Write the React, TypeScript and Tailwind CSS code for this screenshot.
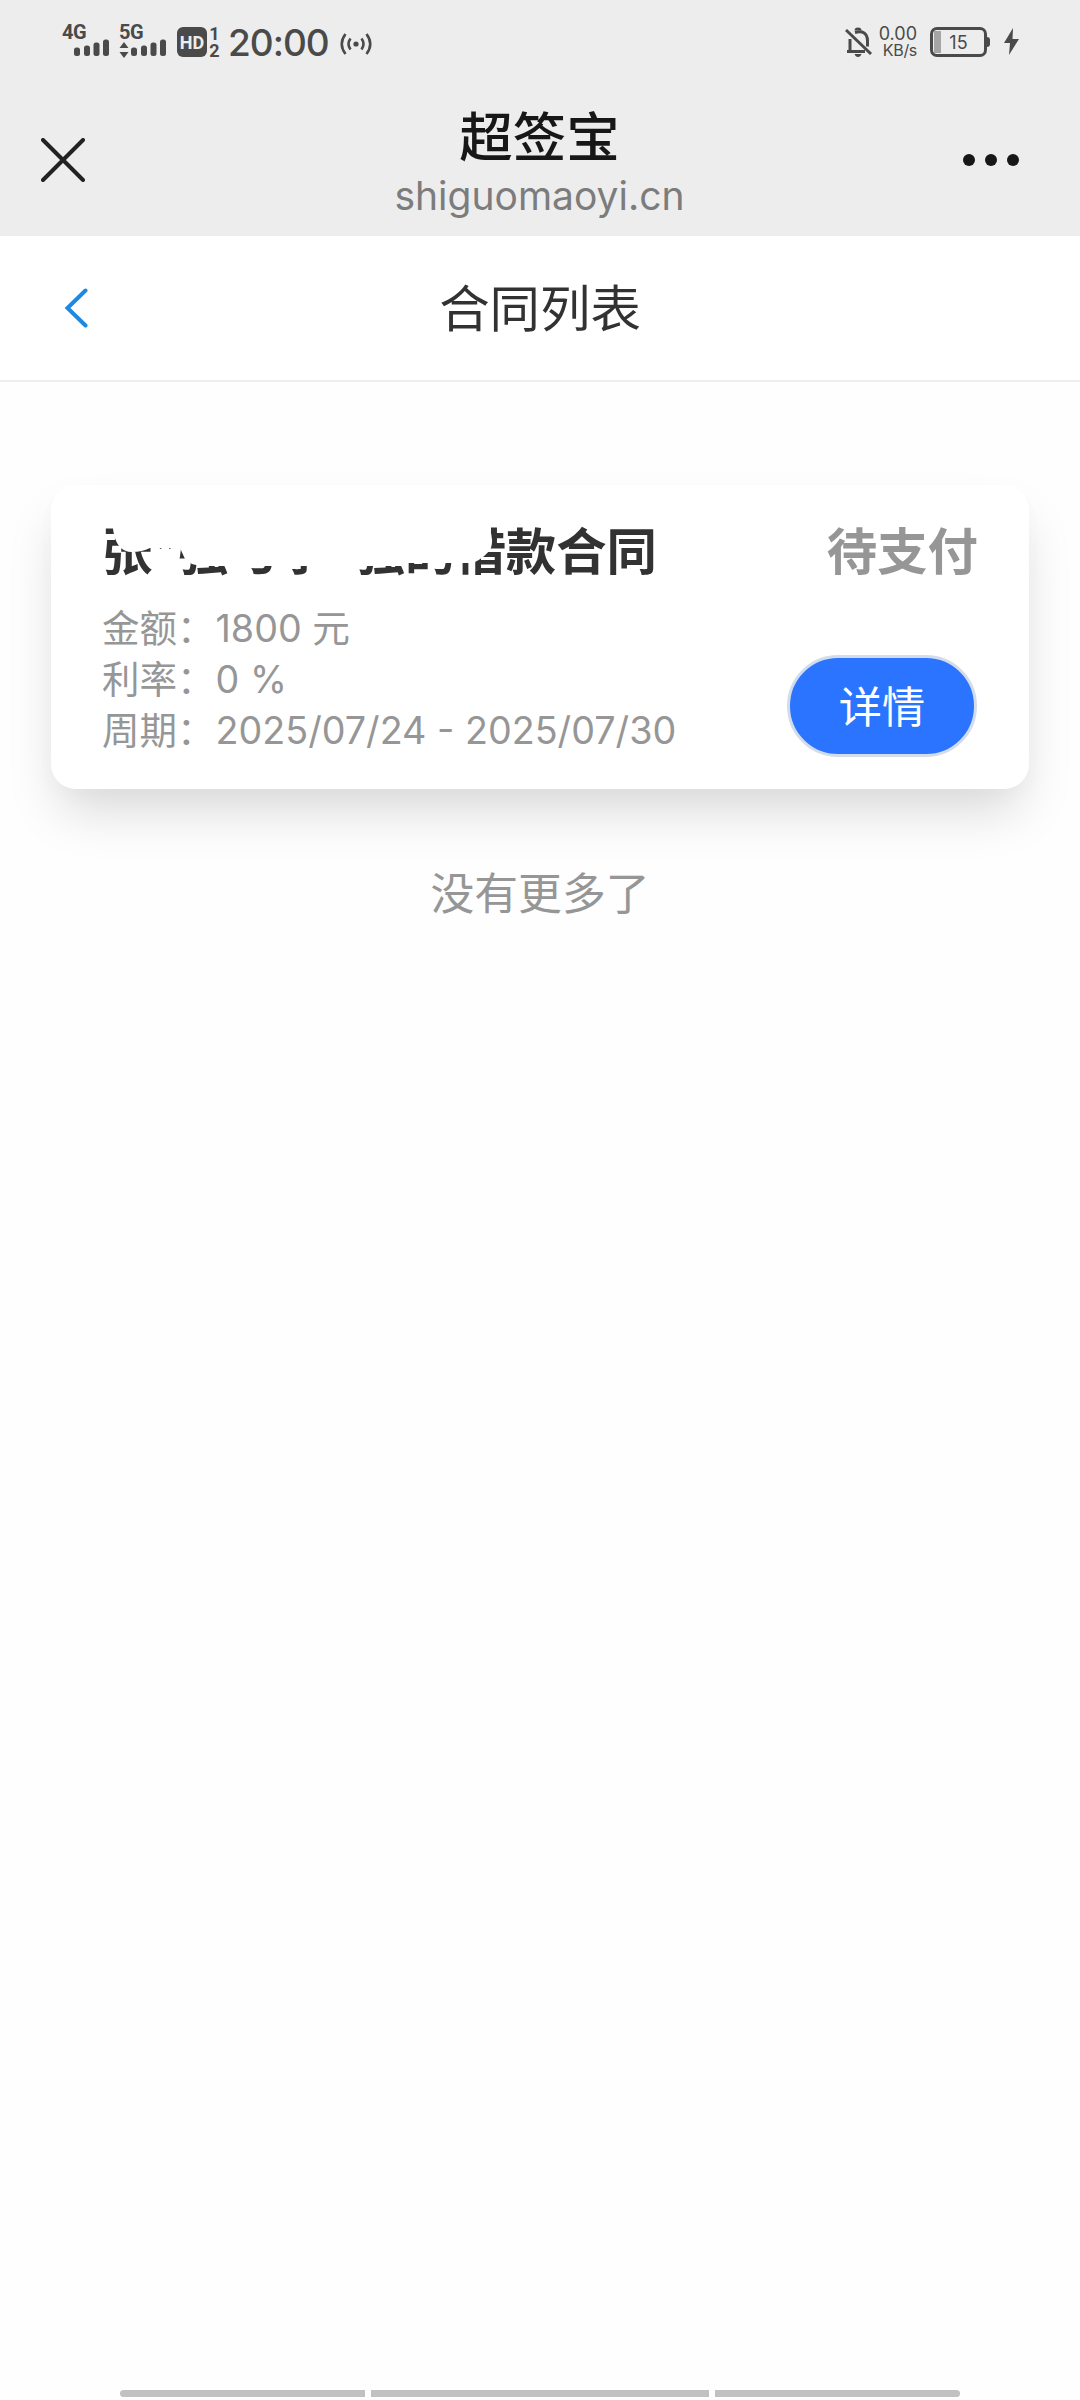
import React from "react";

interface ContractInterface {
  id: number;
  title: string;
  status: string;
  rows: Array<{ label: string; value: string }>;
}

const contracts: Array<ContractInterface> = [
  {
    id: 1,
    title: "张*强与李*强的借款合同",
    status: "待支付",
    rows: [
      { label: "金额：", value: "1800 元" },
      { label: "利率：", value: "0 %" },
      { label: "周期：", value: "2025/07/24 - 2025/07/30" },
    ],
  },
];

const Signal: React.FC<{ label: string; data?: boolean }> = ({ label, data }) => (
  <div className="relative h-[34px] w-[48px] text-[#4a4a4a]">
    <div className="font-['Roboto'] text-[20px] leading-[14px] font-bold tracking-[-0.5px]">{label}</div>
    <svg className="absolute top-0 left-0" width="48" height="34" fill="currentColor">
      {data && <path d="M5 17l4.500 6h-9zM5 33l4.500-6h-9z" />}
      <rect x="12" y="22.500" width="6" height="8.500" rx="2.500" />
      <rect x="22" y="20.500" width="6" height="10.500" rx="2.500" />
      <rect x="31.500" y="17.500" width="6" height="13.500" rx="2.500" />
      <rect x="41" y="14.500" width="6" height="16.500" rx="2.500" />
    </svg>
  </div>
);

const StatusBar: React.FC = () => (
  <div className="flex h-[84px] items-start justify-between pt-[25px] pr-[61px] pl-[62px] text-[#4a4a4a]">
    <div className="flex items-start">
      <Signal label="4G" />
      <div className="ml-[9px]">
        <Signal label="5G" data />
      </div>
      <div className="mt-[2px] ml-[10px] flex h-[30px] w-[30px] items-center justify-center rounded-[6px] bg-[#4a4a4a] font-['Roboto'] text-[18px] font-bold text-[#ededed]">
        HD
      </div>
      <div className="ml-[2px] flex w-[11px] flex-col items-center font-['Roboto'] text-[18px] leading-[17px] font-bold">
        <span>1</span>
        <span>2</span>
      </div>
      <div className="ml-[8px] w-[98px] font-['Inter'] text-[37px] leading-[35px] font-medium tracking-[-1px] whitespace-nowrap">
        20:00
      </div>
      <svg className="mt-[8px] ml-[14px]" width="32" height="22" fill="none" stroke="currentColor" strokeWidth="2.600">
        <circle cx="16" cy="11" r="2.600" fill="currentColor" stroke="none" />
        <path d="M10.500 5.500q-4 5.500 0 11M5.500 1q-7.500 10 0 20M21.500 5.500q4 5.500 0 11M26.500 1q7.500 10 0 20" />
      </svg>
    </div>
    <div className="flex items-start">
      <svg className="mt-[2px]" width="28" height="32" fill="none" stroke="currentColor" strokeWidth="3">
        <path d="M5 12v12M2 24.500h18M10 5.500q12-3 12.500 8v6" />
        <path d="M1 3l25 24" />
        <path d="M9.500 3.500q0-3 3.500-3t3.500 3zM9.500 27h7q-1 3-3.500 3t-3.500-3z" fill="currentColor" stroke="none" />
      </svg>
      <div className="ml-[4px] mr-[1px] flex w-[40px] flex-col items-end font-['Inter'] text-[18px] leading-[17px]">
        <span>0.00</span>
        <span className="text-[16px] tracking-[-0.3px]">KB/s</span>
      </div>
      <div className="mt-[2px] ml-[12px] flex items-center">
        <div className="relative flex h-[30px] w-[57px] items-center justify-center rounded-[7px] border-[3px] border-[#4a4a4a] font-['Inter'] text-[18px]">
          <div className="absolute top-[1px] left-[1px] h-[22px] w-[7px] bg-[#a5a5a5]" />
          15
        </div>
        <div className="h-[10px] w-[3px] rounded-r bg-[#4a4a4a]" />
      </div>
      <svg className="mt-[3px] ml-[14px]" width="15" height="28" fill="currentColor">
        <path d="M9 0L0 15h6L5 27l10-16H8.500z" />
      </svg>
    </div>
  </div>
);

const WebviewBar: React.FC = () => (
  <div className="grid h-[152px] grid-cols-[1fr_auto_1fr] items-center pr-[60px] pl-[41px]">
    <svg width="44" height="44" fill="none" stroke="#222" strokeWidth="4" strokeLinecap="round">
      <path d="M2 2l40 40M42 2L2 42" />
    </svg>
    <div className="mt-[12px] ml-[18px] flex flex-col items-center">
      <div className="text-[53.500px] leading-[59px] font-medium text-[#171717]">超签宝</div>
      <div className="font-['Inter'] text-[39px] leading-[65px] text-[#7c7c7c]">shiguomaoyi.cn</div>
    </div>
    <svg className="justify-self-end" width="58" height="12" fill="#171717">
      <circle cx="7" cy="6" r="6" />
      <circle cx="29" cy="6" r="6" />
      <circle cx="51" cy="6" r="6" />
    </svg>
  </div>
);

const NavBar: React.FC = () => (
  <div className="grid h-[146px] grid-cols-3 items-center border-b-2 border-[#efefef] bg-white px-[64px]">
    <svg width="24" height="40" fill="none" stroke="#1e88e5" strokeWidth="4" strokeLinecap="round">
      <path d="M21.500 2.500L3.500 20L21.500 37.500" />
    </svg>
    <div className="-mt-[5px] text-center text-[50.400px] leading-[60px] text-[#323233]">合同列表</div>
  </div>
);

const ContractCard: React.FC<{ contract: ContractInterface }> = ({ contract }) => (
  <div className="mx-[51px] h-[304px] rounded-[25px] bg-white px-[51px] pt-[33px] shadow-[0_29px_52px_-8px_rgba(0,0,0,0.15),0_8px_28px_rgba(0,0,0,0.015)]">
    <div className="flex items-center justify-between text-[50.400px] leading-[62px] font-bold whitespace-nowrap">
      <div className="relative text-[#323233]">
        {contract.title}
        {/* eraser strokes hiding the names */}
        <svg className="absolute top-0 left-0" width="400" height="62" fill="#fff">
          <path d="M11 0V11Q14 34 30 34Q40 34 48 30H78L83 41L90 46L98 48H300L306 45H371Q384 39 389 30Q392 20 387 10V0z" />
        </svg>
      </div>
      <div className="text-[#969696]">{contract.status}</div>
    </div>
    <div className="flex justify-between pt-[20px]">
      <div className="text-[37.500px] leading-[51px] text-[#969696]">
        {contract.rows.map((row) => (
          <div key={row.label} className="flex whitespace-nowrap">
            <span>{row.label}</span>
            <span className="ml-[1px] pt-[5px] font-['Inter','Noto_Sans_CJK_SC',sans-serif] text-[37.700px] leading-[46px]">
              {row.value}
            </span>
          </div>
        ))}
      </div>
      <button className="mt-[55px] mr-px h-[102px] w-[190px] rounded-full border-[3px] border-[#d3dcea] bg-[#2b74ff] pb-[5px] text-[43.200px] leading-[60px] text-white">
        详情
      </button>
    </div>
  </div>
);

const App: React.FC = () => {
  return (
    <div className="flex h-[2400px] w-[1080px] flex-col overflow-hidden bg-[#fefefe] font-['Noto_Sans_CJK_SC',sans-serif]">
      <div className="bg-[#ededed]">
        <StatusBar />
        <WebviewBar />
      </div>
      <NavBar />
      <div className="flex-1 pt-[103px]">
        {contracts.map((contract) => (
          <ContractCard key={contract.id} contract={contract} />
        ))}
        <div className="pt-[70px] text-center text-[43.800px] leading-[64px] text-[#969696]">没有更多了</div>
      </div>
      <div className="flex justify-center gap-[6px] pb-[3px]">
        <div className="h-[7px] w-[245px] rounded-l-full bg-[#c1c1c1]" />
        <div className="h-[7px] w-[338px] bg-[#c1c1c1]" />
        <div className="h-[7px] w-[245px] rounded-r-full bg-[#c1c1c1]" />
      </div>
    </div>
  );
};

export default App;
